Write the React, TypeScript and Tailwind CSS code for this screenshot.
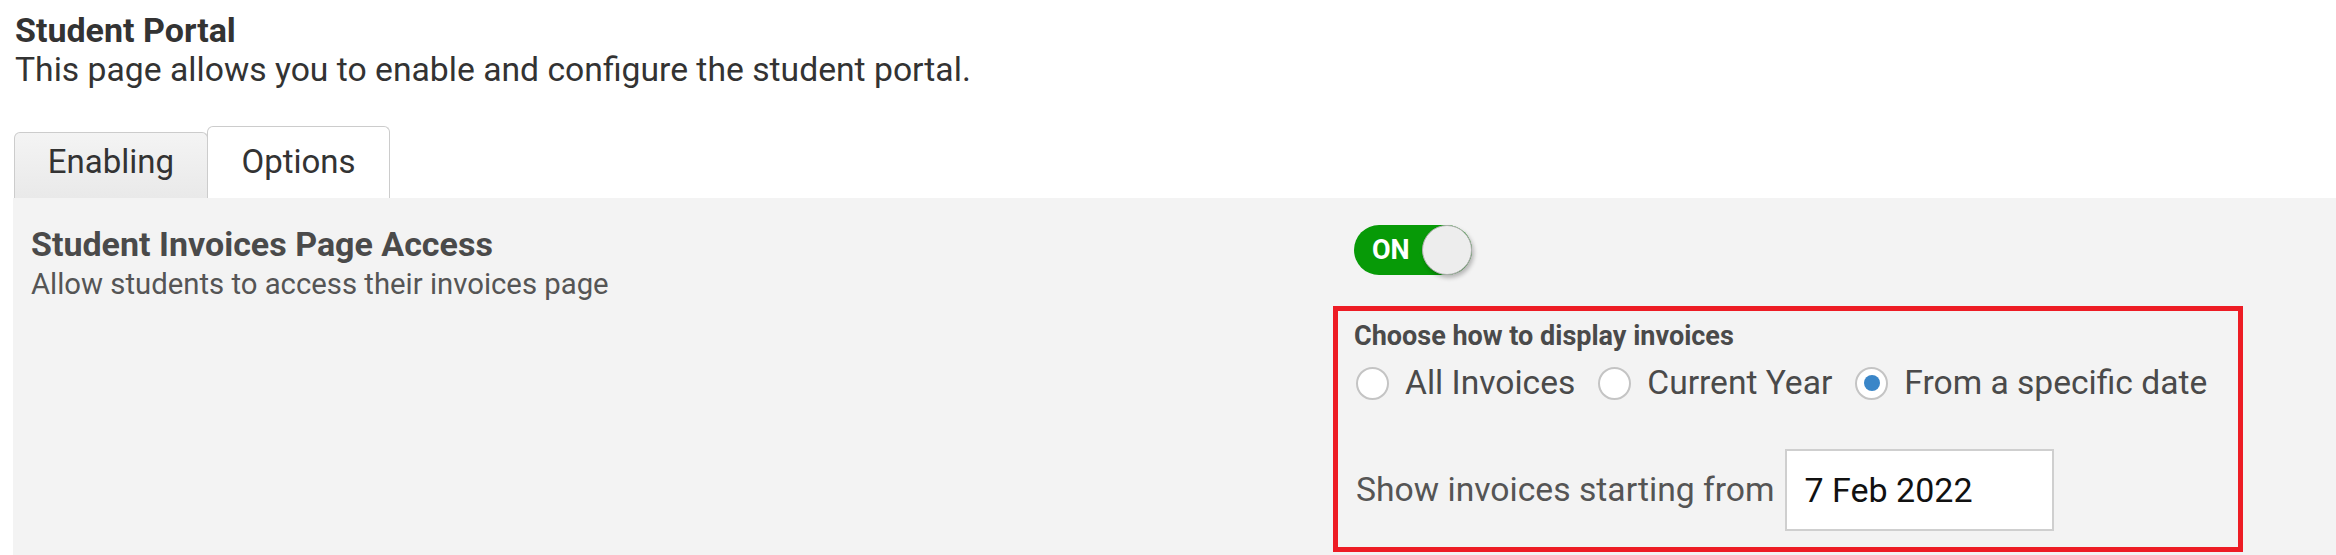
const Radio = ({ checked }: { checked?: boolean }) => (
  <span className="flex w-[33px] h-[33px] shrink-0 items-center justify-center rounded-full border-2 border-[#c4c4c4] bg-white">
    {checked && <span className="block w-[16px] h-[16px] rounded-full bg-[#3a86c8]" />}
  </span>
)

const App = () => {
  return (
    <div className="min-h-[555px] bg-white pl-[13px] font-['Roboto',sans-serif]">
      <h1 className="pl-[2px] pt-[10px] text-[34px] leading-[40px] font-bold text-[#333]">Student Portal</h1>
      <p className="pl-[2px] text-[33.7px] leading-[40px] text-[#333]">
        This page allows you to enable and configure the student portal.
      </p>

      <div className="mt-[36px] flex items-end">
        <div className="ml-px h-[66px] w-[194px] rounded-t-[6px] border border-b-0 border-[#cccccc] bg-gradient-to-b from-[#f4f4f4] to-[#e9e9e9] pt-[9px] text-center text-[33px] leading-[40px] text-[#333]">
          Enabling
        </div>
        <div className="-ml-px h-[72px] w-[183px] rounded-t-[6px] border border-b-0 border-[#cccccc] bg-white pt-[15px] text-center text-[33px] leading-[40px] text-[#333]">
          Options
        </div>
      </div>

      <div className="flex h-[357px] bg-[#f3f3f3]">
        <div className="w-[1320px] shrink-0 pl-[18px] pt-[26px]">
          <div className="text-[34px] leading-[40px] font-bold text-[#4a4a4a]">Student Invoices Page Access</div>
          <div className="mt-[3px] text-[29.3px] leading-[34px] text-[#555]">Allow students to access their invoices page</div>
        </div>

        <div className="pt-[27px]">
          <div className="ml-[21px] flex h-[50px] w-[118px] items-center rounded-full bg-[#079a07]">
            <span className="pl-[18px] text-[27px] font-bold leading-none text-white">ON</span>
            <span className="ml-auto h-[50px] w-[50px] rounded-full border border-[#b0b0b0] bg-[#ededed] shadow-[2px_3px_4px_rgba(0,0,0,0.25)]" />
          </div>

          <div className="mt-[31px] w-[910px] border-[5px] border-[#ed1c24] px-[16px] pt-[10px] pb-[16px]">
            <div className="text-[27px] leading-[30px] font-bold text-[#4a4a4a]">Choose how to display invoices</div>
            <div className="mt-[12px] flex h-[40px] items-center pl-[2px] text-[33.6px] text-[#4a4a4a]">
              <Radio />
              <span className="ml-[16px] mr-[23px]">All Invoices</span>
              <Radio />
              <span className="ml-[16px] mr-[23px]">Current Year</span>
              <Radio checked />
              <span className="ml-[16px]">From a specific date</span>
            </div>
            <div className="mt-[46px] flex items-center pl-[2px]">
              <span className="text-[33.7px] text-[#555]">Show invoices starting from</span>
              <div className="ml-[10px] flex h-[82px] w-[269px] items-center border-2 border-[#cfcfcf] bg-white pl-[18px] text-[34px] text-[#111]">
                7 Feb 2022
              </div>
            </div>
          </div>
        </div>
      </div>
    </div>
  )
}

export default App
